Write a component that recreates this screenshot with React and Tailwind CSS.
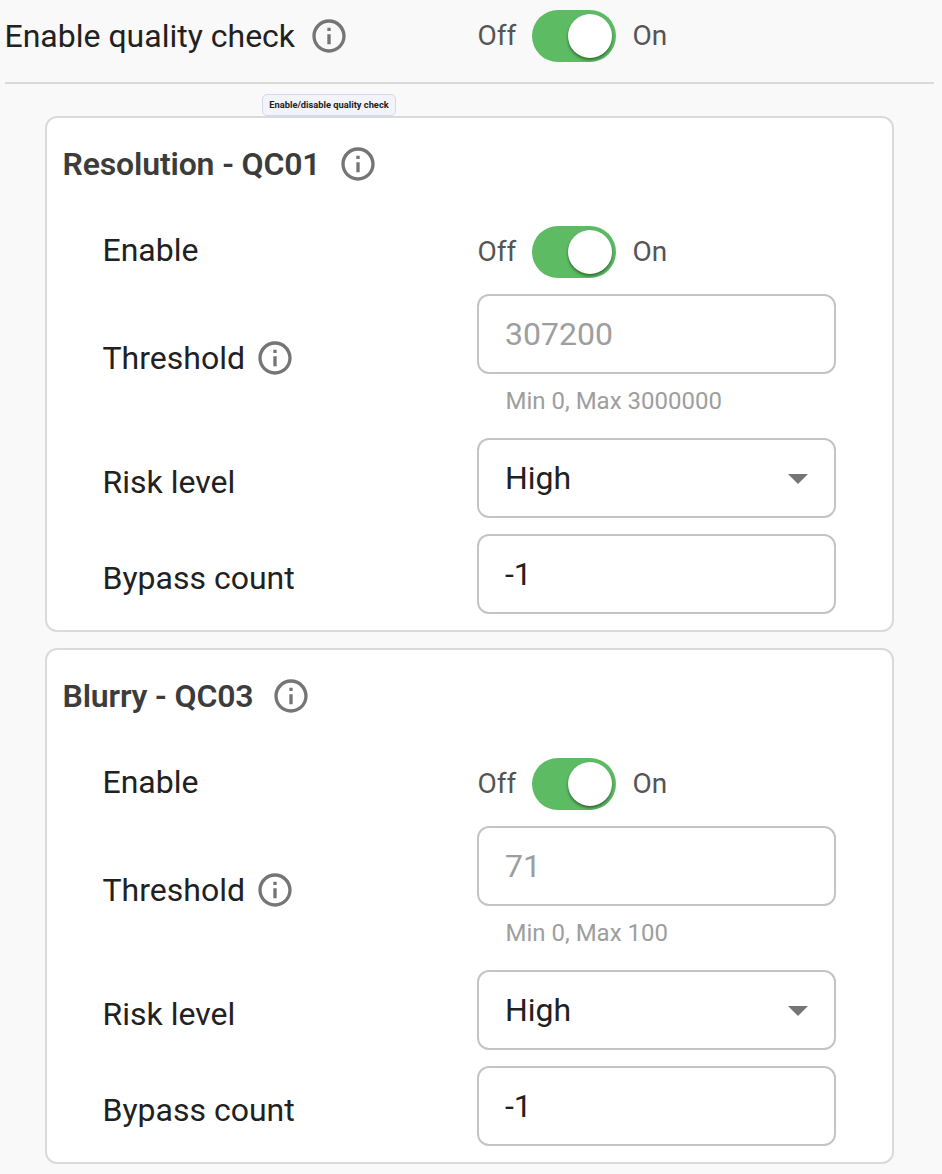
import React from 'react';

function InfoIcon({ className = '' }) {
  return (
    <svg viewBox="0 0 24 24" fill="#757575" className={`h-10 w-10 shrink-0 ${className}`}>
      <path d="M11 7h2v2h-2zm0 4h2v6h-2zm1-9C6.48 2 2 6.48 2 12s4.48 10 10 10 10-4.48 10-10S17.52 2 12 2zm0 18c-4.41 0-8-3.59-8-8s3.59-8 8-8 8 3.59 8 8-3.59 8-8 8z" />
    </svg>
  );
}

function Toggle() {
  return (
    <div className="flex h-[52px] items-center text-[28px] leading-[52px] text-[#555]">
      <span className="w-[55px] pl-[0.5px]">Off</span>
      <button className="flex h-[52px] w-[84px] items-center justify-end overflow-hidden rounded-full bg-[#5dbb63] pr-1">
        <span className="h-11 w-11 rounded-full bg-white shadow-[0_2px_3px_rgba(0,0,0,0.45)]" />
      </button>
      <span className="ml-[16.5px]">On</span>
    </div>
  );
}

function Row({ label, info, className = '', children }) {
  return (
    <div className={`flex ${className}`}>
      <div className="-ml-[0.5px] flex w-[374.5px] shrink-0 items-center text-[#212121]">
        <span>{label}</span>
        {info && <InfoIcon className="ml-[10.5px]" />}
      </div>
      <div className="w-[359px]">{children}</div>
    </div>
  );
}

function Field({ children, className = '' }) {
  return (
    <div className={`flex h-20 items-center justify-between rounded-[12px] border-2 border-[#c4c4c4] px-[26px] text-[#212121] ${className}`}>
      {children}
    </div>
  );
}

function CheckCard({ title, threshold, range }) {
  return (
    <section className="h-[516px] w-[849px] rounded-[12px] border-2 border-[#dadada] bg-white pl-[15.5px]">
      <h2 className="flex h-[92px] items-center text-[32px] font-semibold tracking-[-0.15px] text-[#3c3c3c]">
        <span>{title}</span>
        <InfoIcon className="ml-[18px]" />
      </h2>
      <div className="flex flex-col gap-4 pt-4 pl-[40.5px]">
        <Row label="Enable" className="[&>div:first-child]:pb-1">
          <Toggle />
        </Row>
        <Row label="Threshold" info className="h-32">
          <Field className="text-[#9e9e9e]!">{threshold}</Field>
          <p className="pl-[28.5px] pt-3 text-[24px] leading-[30px] text-[#9e9e9e]">{range}</p>
        </Row>
        <Row label="Risk level" className="[&>div:first-child]:pt-2">
          <Field>
            High
            <svg viewBox="0 0 20 10" className="h-[10px] w-5 translate-y-px">
              <path d="M0 0h20L10 10z" fill="#757575" />
            </svg>
          </Field>
        </Row>
        <Row label="Bypass count" className="[&>div:first-child]:pt-2">
          <Field>-1</Field>
        </Row>
      </div>
    </section>
  );
}

export default function App() {
  return (
    <main className="h-[1174px] w-[942px] overflow-hidden bg-[#f9f9f9] pl-[5px] font-['Roboto',sans-serif] text-[32px] leading-[40px]">
      <header className="relative flex h-[84px] w-[929px] border-b-2 border-[#dadada] pt-[10px]">
        <div className="-ml-[0.5px] flex h-[52px] w-[472.5px] items-center text-[#212121]">
          <span>Enable quality check</span>
          <InfoIcon className="ml-[13.5px]" />
        </div>
        <Toggle />
        <div className="absolute top-[94px] left-[257px] z-10 flex h-[22px] w-[134px] items-center justify-center rounded-[5px] border border-[#d5d8ea] bg-[#f3f3fa] text-[9.3px] leading-none font-bold whitespace-nowrap text-[#212121]">
          Enable/disable quality check
        </div>
      </header>
      <div className="flex flex-col gap-4 pt-8 pl-10">
        <CheckCard title="Resolution - QC01" threshold="307200" range="Min 0, Max 3000000" />
        <CheckCard title="Blurry - QC03" threshold="71" range="Min 0, Max 100" />
      </div>
    </main>
  );
}
